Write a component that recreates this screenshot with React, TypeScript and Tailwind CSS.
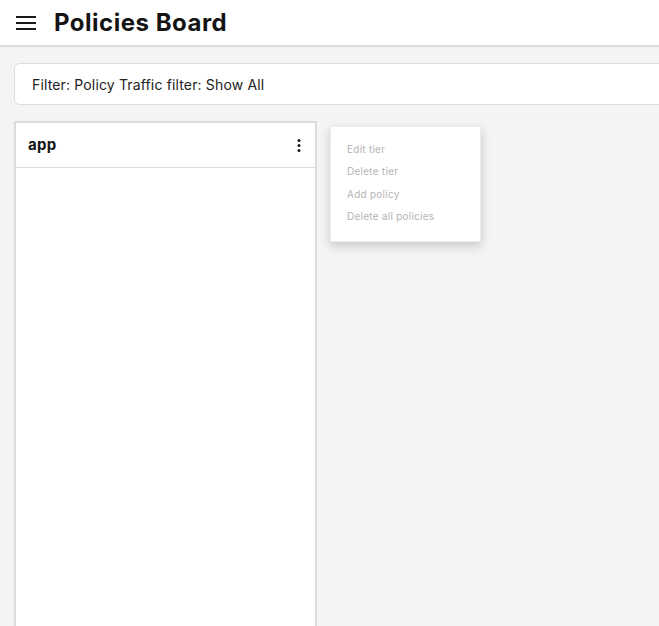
import React from 'react';

const MENU_ITEMS = ['Edit tier', 'Delete tier', 'Add policy', 'Delete all policies'];

export default function App() {
  return (
    <div className="relative h-[626px] w-[659px] overflow-hidden bg-[#f4f4f4] font-['Inter',sans-serif] text-[#1a1a1a]">
      {/* header */}
      <header className="flex h-[47px] items-center gap-[18px] border-b-2 border-[#dcdce0] bg-white pl-4">
        <svg width="20" height="14" viewBox="0 0 20 14" className="mt-[1px]">
          <rect x="0" y="0" width="20" height="2" fill="#1a1a1a" />
          <rect x="0" y="6" width="20" height="2" fill="#1a1a1a" />
          <rect x="0" y="12" width="20" height="2" fill="#1a1a1a" />
        </svg>
        <h1 className="text-[24px] font-bold tracking-[0.5px] text-[#141414]">Policies Board</h1>
      </header>

      <div className="px-[14px] pt-4">
        {/* filter bar */}
        <div className="flex h-[42px] w-[700px] items-center rounded-md border border-[#dedee2] bg-white pl-[17px] text-[14px] tracking-[0.15px] text-[#222]">
          Filter: Policy Traffic filter: Show All
        </div>

        {/* tiers */}
        <div className="mt-[16px] flex">
          <div className="h-[520px] w-[303px] border-2 border-[#dcdce0] bg-white">
            <div className="flex h-[45px] items-center justify-between border-b border-[#dcdce0] pl-3 pr-[14px]">
              <span className="text-[15px] font-bold tracking-[0.3px] text-[#141414]">app</span>
              <svg width="4" height="13" viewBox="0 0 4 13">
                <circle cx="2" cy="1.6" r="1.5" fill="#1a1a1a" />
                <circle cx="2" cy="6.5" r="1.5" fill="#1a1a1a" />
                <circle cx="2" cy="11.4" r="1.5" fill="#1a1a1a" />
              </svg>
            </div>
          </div>
        </div>
      </div>

      {/* context menu */}
      <div className="absolute left-[330px] top-[126px] w-[151px] border border-[#ececec] bg-white pb-[13px] pt-[11px] shadow-[0_4px_10px_rgba(0,0,0,0.18)]">
        {MENU_ITEMS.map((item) => (
          <div key={item} className="flex h-[22.5px] items-center pl-[16px] text-[10px] tracking-[0.25px] text-[#b4b4b4]">
            {item}
          </div>
        ))}
      </div>
    </div>
  );
}
